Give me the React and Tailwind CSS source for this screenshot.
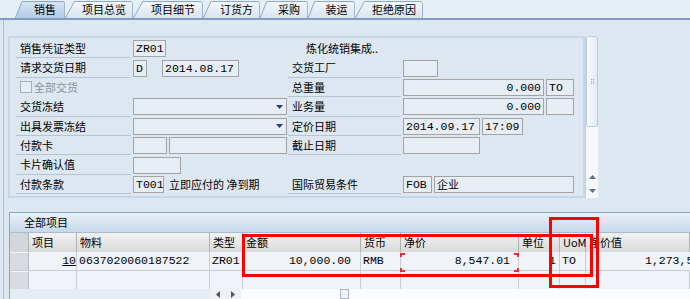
import React from "react";

const cjk = "font-[family-name:'Noto_Sans_CJK_SC','Noto_Sans',sans-serif]";
const mono = "font-[family-name:'Liberation_Mono',monospace]";

const tabs = [
  { label: "销售", w: "w-[50px]", active: true },
  { label: "项目总览", w: "w-[68px]" },
  { label: "项目细节", w: "w-[70px]" },
  { label: "订货方", w: "w-[57px]" },
  { label: "采购", w: "w-[48px]" },
  { label: "装运", w: "w-[47px]" },
  { label: "拒绝原因", w: "w-[68px]" },
];

const Tab = ({ label, w, active }) => (
  <div className={`relative h-[18px] shrink-0 ${w}`}>
    <svg className="absolute inset-0 h-full w-full" preserveAspectRatio="none" viewBox="0 0 100 18">
      <defs>
        <linearGradient id={active ? "tabA" : "tabI"} x1="0" y1="0" x2="0" y2="1">
          <stop offset="0" stopColor={active ? "#d6e5f4" : "#f4f7fb"} />
          <stop offset="1" stopColor={active ? "#b3cbe6" : "#d9e4f0"} />
        </linearGradient>
      </defs>
      <path
        d="M0.5,18 L14,1.5 L97,1.5 L99.5,3.5 L99.5,18"
        fill={`url(#${active ? "tabA" : "tabI"})`}
        stroke="#8da7c6"
        strokeWidth="1"
        vectorEffect="non-scaling-stroke"
      />
    </svg>
    <div className={`relative flex h-full items-center justify-center pl-[10px] pt-[1px] text-[11px] text-black ${cjk}`}>
      {label}
    </div>
  </div>
);

const Field = ({ className = "", right, children }) => (
  <div
    className={`h-[17px] shrink-0 overflow-hidden whitespace-nowrap border border-[#a3a3a3] bg-[#e6edf5] px-[2px] text-[11.5px] leading-[15px] text-black ${mono} ${
      right ? "text-right" : ""
    } ${className}`}
  >
    {children}
  </div>
);

const Select = ({ className = "" }) => (
  <div className={`flex h-[17px] shrink-0 items-center justify-end border border-[#a3a3a3] bg-[#e6edf5] pr-[3px] ${className}`}>
    <svg width="7" height="4" viewBox="0 0 7 4">
      <path d="M0,0 L7,0 L3.5,4 Z" fill="#2b3f6c" />
    </svg>
  </div>
);

const Label = ({ w = "w-[115px]", children }) => (
  <div className={`flex h-full shrink-0 items-center border-b border-[#b5c4d4] pl-[4px] text-[11px] text-black ${cjk} ${w}`}>
    {children}
  </div>
);

const Row = ({ left, right }) => (
  <div className="flex h-[19.4px] items-center">
    <div className="flex h-full w-[272px] shrink-0 items-center">{left}</div>
    <div className="flex h-full flex-1 items-center">{right}</div>
  </div>
);

const cols = [
  { w: "w-[48px]", h: "项目" },
  { w: "w-[133px]", h: "物料" },
  { w: "w-[33px]", h: "类型" },
  { w: "w-[118px]", h: "金额" },
  { w: "w-[40px]", h: "货币" },
  { w: "w-[118px]", h: "净价" },
  { w: "w-[41px]", h: "单位" },
  { w: "w-[26px]", h: "UoM" },
  { w: "flex-1", h: "净价值" },
];

const rowData = [
  { v: "10", right: true, link: true },
  { v: "0637020060187522" },
  { v: "ZR01" },
  { v: "10,000.00", right: true, pr: "pr-[9px]" },
  { v: "RMB" },
  { v: "8,547.01", right: true, pr: "pr-[8px]" },
  { v: "1", right: true, pr: "pr-[3px]" },
  { v: "TO" },
  { v: "1,273,5", pl: "pl-[59px]" },
];

export default function App() {
  return (
    <div className="relative h-[299px] w-[690px] overflow-hidden bg-[#dde7f1]">
      {/* tab strip */}
      <div className="flex h-[20px] items-end border-b-2 border-[#7f9dc4] bg-[#e6eef6] pl-[15px]">
        {tabs.map((t) => (
          <Tab key={t.label} {...t} />
        ))}
      </div>

      <div className="h-[279px] pl-[3px]">
        <div className="h-full border-l border-[#a9bed5] pl-[4px]">
          {/* header fields */}
          <div className="flex pt-[16px]">
            <div className="h-[162px] w-[577px] border-2 border-[#c7d6e7] pl-[6px] pt-[1px]">
              <Row
                left={
                  <>
                    <Label>销售凭证类型</Label>
                    <Field className="ml-[2px] w-[33px]">ZR01</Field>
                  </>
                }
                right={<div className={`pl-[18px] text-[11px] ${cjk}`}>炼化统销集成..</div>}
              />
              <Row
                left={
                  <>
                    <Label>请求交货日期</Label>
                    <Field className="ml-[2px] w-[14px]">D</Field>
                    <Field className="ml-[15px] w-[77px]">2014.08.17</Field>
                  </>
                }
                right={
                  <>
                    <Label w="w-[113px]">交货工厂</Label>
                    <Field className="ml-[2px] w-[35px]" />
                  </>
                }
              />
              <Row
                left={
                  <div className={`flex items-center pl-[4px] text-[11px] text-[#8e9398] ${cjk}`}>
                    <span className="mr-[2px] h-[12px] w-[12px] border border-[#a7aeb6] bg-[#e6edf5]" />
                    全部交货
                  </div>
                }
                right={
                  <>
                    <Label w="w-[113px]">总重量</Label>
                    <Field right className="ml-[2px] w-[141px]">0.000</Field>
                    <Field className="ml-[2px] w-[28px]">TO</Field>
                  </>
                }
              />
              <Row
                left={
                  <>
                    <Label>交货冻结</Label>
                    <Select className="ml-[2px] w-[154px]" />
                  </>
                }
                right={
                  <>
                    <Label w="w-[113px]">业务量</Label>
                    <Field right className="ml-[2px] w-[141px]">0.000</Field>
                    <Field className="ml-[2px] w-[28px]" />
                  </>
                }
              />
              <Row
                left={
                  <>
                    <Label>出具发票冻结</Label>
                    <Select className="ml-[2px] w-[154px]" />
                  </>
                }
                right={
                  <>
                    <Label w="w-[113px]">定价日期</Label>
                    <Field className="ml-[2px] w-[77px]">2014.09.17</Field>
                    <Field className="ml-[2px] w-[41px]">17:09</Field>
                  </>
                }
              />
              <Row
                left={
                  <>
                    <Label>付款卡</Label>
                    <Field className="ml-[2px] w-[34px]" />
                    <Field className="ml-[2px] w-[118px]" />
                  </>
                }
                right={
                  <>
                    <Label w="w-[113px]">截止日期</Label>
                    <Field className="ml-[2px] w-[77px]" />
                  </>
                }
              />
              <Row
                left={
                  <>
                    <Label>卡片确认值</Label>
                    <Field className="ml-[2px] w-[48px]" />
                  </>
                }
                right={null}
              />
              <Row
                left={
                  <>
                    <Label>付款条款</Label>
                    <Field className="ml-[2px] w-[31px]">T001</Field>
                    <div className={`ml-[5px] whitespace-nowrap text-[11px] ${cjk}`}>立即应付的 净到期</div>
                  </>
                }
                right={
                  <>
                    <Label w="w-[113px]">国际贸易条件</Label>
                    <Field className="ml-[2px] w-[29px]">FOB</Field>
                    <Field className={`ml-[2px] w-[140px] text-[11px] ${cjk}`}>企业</Field>
                  </>
                }
              />
            </div>

            {/* vertical scrollbar */}
            <div className="flex h-[162px] w-[13px] flex-col border-l border-[#c3d1e0] bg-[#f6f8fb]">
              <div className="flex h-[91px] items-center justify-center rounded-[2px] border border-[#bccbdb] bg-gradient-to-r from-[#f8fafd] to-[#e2eaf3]">
                <div className="grid grid-cols-2 gap-[1px]">
                  {[0, 1, 2, 3, 4, 5].map((i) => (
                    <span key={i} className="h-[1px] w-[1px] bg-[#8a9bb0]" />
                  ))}
                </div>
              </div>
              <div className="flex-1" />
              <div className="flex h-[14px] items-center justify-center">
                <svg width="7" height="4" viewBox="0 0 7 4">
                  <path d="M0,4 L7,4 L3.5,0 Z" fill="#5c6f88" />
                </svg>
              </div>
              <div className="flex h-[14px] items-center justify-center">
                <svg width="7" height="4" viewBox="0 0 7 4">
                  <path d="M0,0 L7,0 L3.5,4 Z" fill="#5c6f88" />
                </svg>
              </div>
            </div>
          </div>

          {/* item table */}
          <div className="ml-[1px] mt-[14px] border-l border-t border-[#8aa3bf]">
            <div className="flex h-[20px] items-center border-b border-[#a8bcd1] bg-gradient-to-b from-[#e9f0f7] to-[#c6d8ea] pl-[14px]">
              <span className={`text-[11px] text-black ${cjk}`}>全部项目</span>
            </div>

            <div className="flex h-[19px] bg-gradient-to-b from-[#f3f3f3] to-[#d9d9d9]">
              <div className="w-[19px] shrink-0 border-r border-[#b1b1b1] bg-[#d3d6da]" />
              {cols.map((c) => (
                <div
                  key={c.h}
                  className={`flex items-center border-r border-[#b1b1b1] pl-[3px] text-[11px] text-black ${cjk} ${c.w} ${
                    c.w === "flex-1" ? "" : "shrink-0"
                  }`}
                >
                  {c.h}
                </div>
              ))}
            </div>

            <div className="flex h-[19px] border-b border-[#c6cdd5] bg-[#f0f3f7]">
              <div className="w-[19px] shrink-0 border-r border-[#b7bcc2] border-t border-t-[#f4f4f4] bg-[#d7dadf]" />
              {cols.map((c, i) => {
                const d = rowData[i];
                return (
                  <div
                    key={c.h}
                    className={`flex items-center whitespace-nowrap border-r border-[#c6cdd5] text-[11.5px] text-black ${mono} ${c.w} ${
                      c.w === "flex-1" ? "" : "shrink-0"
                    } ${d.right ? "justify-end" : "pl-[2px]"} ${d.pr || ""} ${d.pl || ""}`}
                  >
                    <span className={d.link ? "underline" : ""}>{d.v}</span>
                  </div>
                );
              })}
            </div>

            <div className="flex h-[18px] bg-[#f0f3f7]">
              <div className="w-[19px] shrink-0 border-r border-[#b7bcc2] border-t border-t-[#f4f4f4] bg-[#d7dadf]" />
              {cols.map((c) => (
                <div
                  key={c.h}
                  className={`border-r border-[#c6cdd5] ${c.w} ${c.w === "flex-1" ? "" : "shrink-0"}`}
                />
              ))}
            </div>

            {/* horizontal scrollbar */}
            <div className="flex h-[10px] items-stretch">
              <div className="w-[200px] shrink-0 bg-[#e4ecf4]" />
              <div className="flex w-[31px] shrink-0 items-center justify-around bg-[#eef2f7]">
                <svg width="4" height="7" viewBox="0 0 4 7">
                  <path d="M4,0 L4,7 L0,3.5 Z" fill="#4a5568" />
                </svg>
                <svg width="4" height="7" viewBox="0 0 4 7">
                  <path d="M0,0 L0,7 L4,3.5 Z" fill="#4a5568" />
                </svg>
              </div>
              <div className="flex flex-1 bg-[#fbfcfd] pl-[99px]">
                <div className="h-full w-[9px] border border-[#a8b3bf] bg-[#f1f4f8]" />
              </div>
            </div>
          </div>
        </div>
      </div>

      {/* annotation boxes */}
      <div className="absolute left-[242px] top-[234px] h-[43px] w-[351px] border-[3px] border-[#ff0000]" />
      <div className="absolute left-[549px] top-[217px] h-[71px] w-[50px] border-[3px] border-[#ff0000]" />

      {/* focused cell corners */}
      <span className="absolute left-[400px] top-[253px] h-[4px] w-[5px] border-l-2 border-t-2 border-[#e03030]" />
      <span className="absolute left-[400px] top-[268px] h-[4px] w-[5px] border-b-2 border-l-2 border-[#e03030]" />
      <span className="absolute left-[514px] top-[253px] h-[4px] w-[5px] border-r-2 border-t-2 border-[#e03030]" />
      <span className="absolute left-[514px] top-[268px] h-[4px] w-[5px] border-b-2 border-r-2 border-[#e03030]" />
    </div>
  );
}
